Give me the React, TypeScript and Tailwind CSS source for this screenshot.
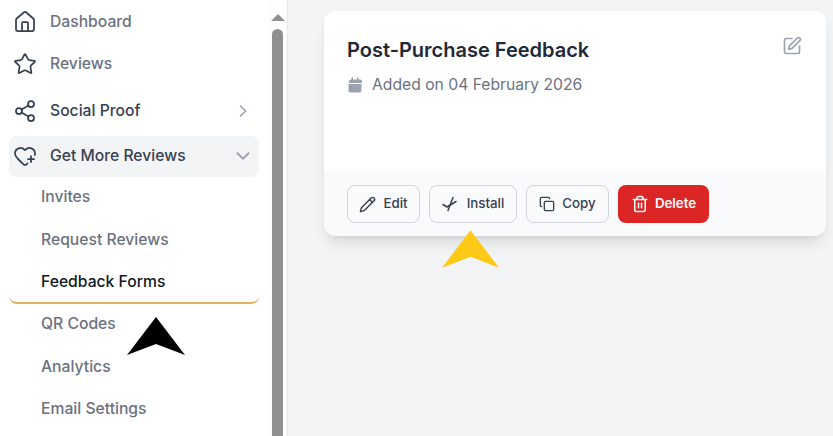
import { ChevronDown, ChevronRight, Copy, House, Pencil, Share2, SquarePen, Star, Trash2, HeartPlus } from "lucide-react";

const font = "font-['Inter',sans-serif]";

function Arrow({ color, className }: { color: string; className: string }) {
  return (
    <svg className={className} viewBox="0 0 58 38" width="58" height="38">
      <path d="M29 0 L58 38 L29 27 L0 38 Z" fill={color} />
    </svg>
  );
}

function SubItem({ label, active }: { label: string; active?: boolean }) {
  return (
    <div
      className={`h-[42.4px] pl-[32px] flex items-center text-[15.7px] font-medium ${
        active ? "text-[#111827] border-b-2 border-[#dcb15f] rounded-b-lg" : "text-[#6b7280] pb-[2.6px]"
      }`}
    >
      {label}
    </div>
  );
}

export default function App() {
  return (
    <div className={`${font} w-[833px] h-[436px] overflow-hidden flex bg-[#f3f4f6]`}>
      {/* Sidebar */}
      <aside className="relative w-[288px] h-full shrink-0 bg-white border-r border-[#e5e7eb] flex">
        <nav className="w-[268px] pl-[9px] pr-[9px] shrink-0">
          <div className="h-[44px] flex items-center gap-[13px] pl-[4px] text-[15.7px] font-medium text-[#6b7280]">
            <House size={24} strokeWidth={1.75} className="text-[#374151]" />
            Dashboard
          </div>
          <div className="h-[39px] flex items-center gap-[13px] pl-[4px] text-[15.7px] font-medium text-[#6b7280]">
            <Star size={24} strokeWidth={1.75} className="text-[#374151]" />
            Reviews
          </div>
          <div className="h-[53px] pt-[2px] flex items-center gap-[13px] pl-[4px] pr-[6px] text-[15.7px] font-medium text-[#374151]">
            <Share2 size={24} strokeWidth={1.75} className="text-[#374151]" />
            <span className="flex-1">Social Proof</span>
            <ChevronRight size={20} className="text-[#9ca3af]" />
          </div>
          <div className="h-[41px] pb-[1px] flex items-center gap-[13px] pl-[4px] pr-[5px] rounded-lg bg-[#f3f4f6] text-[15.7px] font-medium text-[#374151]">
            <HeartPlus size={24} strokeWidth={1.75} className="text-[#374151]" />
            <span className="flex-1">Get More Reviews</span>
            <ChevronDown size={22} className="text-[#9ca3af]" />
          </div>
          <SubItem label="Invites" />
          <SubItem label="Request Reviews" />
          <SubItem label="Feedback Forms" active />
          <SubItem label="QR Codes" />
          <SubItem label="Analytics" />
          <SubItem label="Email Settings" />
        </nav>
        <div className="w-[19px] h-full bg-[#fdfdfd] flex flex-col items-center pt-[14px]">
          <div className="w-0 h-0 border-l-[7px] border-r-[7px] border-b-[7px] border-l-transparent border-r-transparent border-b-[#8f8f8f]" />
          <div className="w-[11px] flex-1 mt-[8px] rounded-t-[6px] bg-[#8f8f8f]" />
        </div>
        <Arrow color="#000000" className="absolute left-[127px] top-[317px]" />
      </aside>

      {/* Main */}
      <main className="relative flex-1 pt-[11px] pl-[36px] pr-[7px]">
        <div className="h-[225px] rounded-xl bg-white shadow-lg overflow-hidden flex flex-col">
          <div className="flex-1 pl-[23px] pr-[24px] pt-[27px] flex justify-between">
            <div>
              <h2 className="text-[20px] leading-[25px] font-semibold text-[#1f2937]">Post-Purchase Feedback</h2>
              <div className="mt-[10px] flex items-center gap-[9px] text-[15.7px] text-[#6b7280]">
                <svg width="16" height="16" viewBox="0 0 16 16" fill="#9ca3af">
                  <path d="M4.5 0.5h1.5v2h4v-2h1.5v2h1.5a2 2 0 0 1 2 2v1.5h-13v-1.5a2 2 0 0 1 2-2h0.5z" />
                  <path d="M1.5 7h13v6.5a2 2 0 0 1-2 2h-9a2 2 0 0 1-2-2z" />
                </svg>
                Added on 04 February 2026
              </div>
            </div>
            <SquarePen size={20} className="text-[#9ca3af] -mt-[2px]" />
          </div>
          <div className="h-[65px] bg-[#f9fafb] pl-[23px] flex items-start gap-[9px] pt-[14px]">
            <button className="h-[38px] w-[73px] flex items-center justify-center gap-[7px] rounded-lg border border-[#d1d5db] text-[13.3px] font-medium text-[#374151]">
              <Pencil size={17} />
              Edit
            </button>
            <button className="h-[38px] w-[88px] flex items-center justify-center gap-[9px] rounded-lg border border-[#d1d5db] text-[13.3px] font-medium text-[#374151]">
              <svg width="16" height="16" viewBox="0 0 16 16" fill="none" stroke="currentColor" strokeWidth="1.5" strokeLinecap="round" strokeLinejoin="round">
                <path d="M1 8.5 L5 11 L14 5.5" />
                <path d="M11 1.5 L6 14.5" />
              </svg>
              Install
            </button>
            <button className="h-[38px] w-[83px] flex items-center justify-center gap-[7px] rounded-lg border border-[#d1d5db] text-[13.3px] font-medium text-[#374151]">
              <Copy size={16} />
              Copy
            </button>
            <button className="h-[38px] w-[91px] flex items-center justify-center gap-[6px] rounded-lg bg-[#dc2626] text-[13.3px] font-semibold text-white">
              <Trash2 size={18} />
              Delete
            </button>
          </div>
        </div>
        <Arrow color="#ffc917" className="absolute left-[154px] top-[230px] w-[57px]" />
      </main>
    </div>
  );
}
